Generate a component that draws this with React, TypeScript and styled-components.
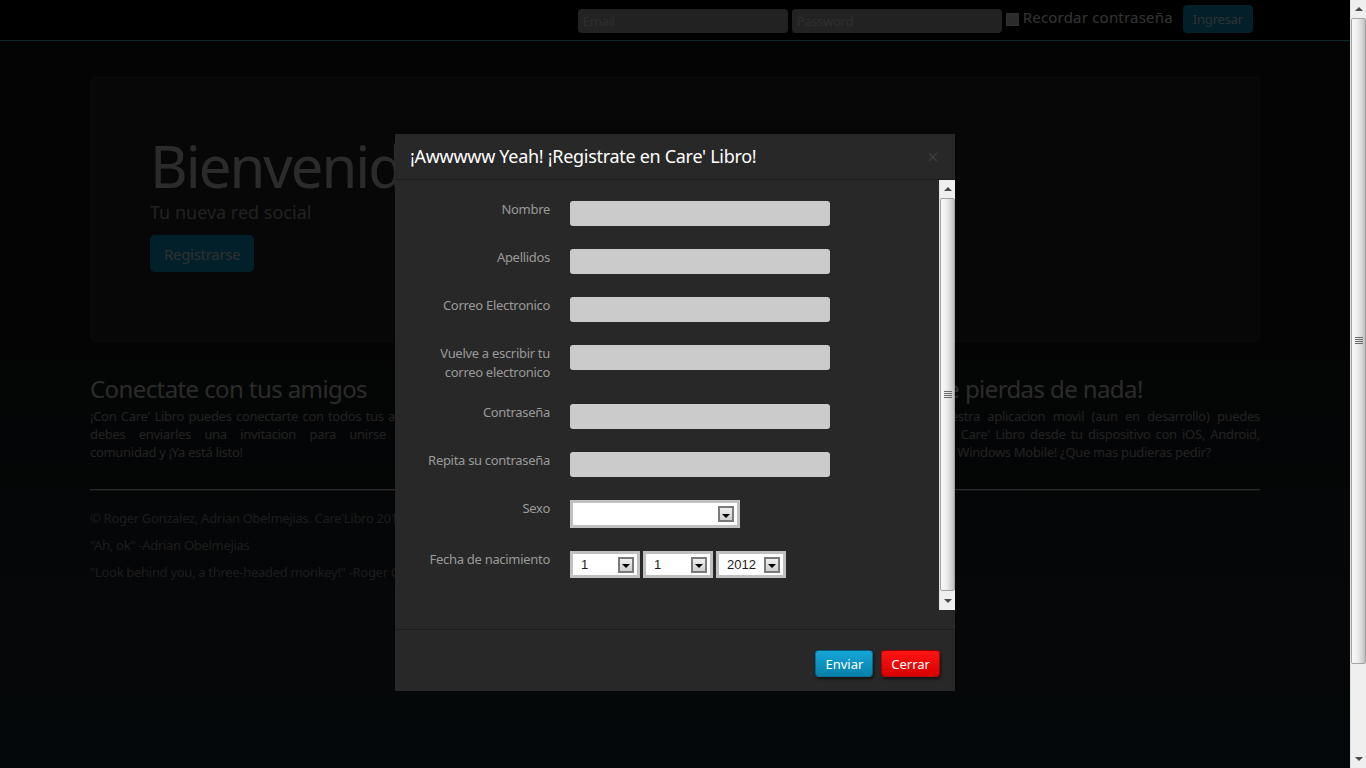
import React from "react";
import styled, { createGlobalStyle } from "styled-components";

const GlobalStyle = createGlobalStyle`
  html, body { margin: 0; padding: 0; height: 100%; overflow: hidden; background: #000; }
  body { font-family: "Noto Sans", "Open Sans", sans-serif; }
  #root { height: 100%; }
  *, *::before, *::after { box-sizing: border-box; }
`;

const Shell = styled.div`
  display: flex;
  width: 100%;
  height: 100vh;
`;

const Viewport = styled.div`
  position: relative;
  flex: 1;
  overflow: hidden;
  background: linear-gradient(to bottom, #141414 0%, #161819 45%, #1c2b35 100%);
`;

/* ---------- navbar ---------- */
const NavBar = styled.header`
  height: 41px;
  background: #000;
  border-bottom: 1px solid #40c2f0;
`;

const NavInner = styled.form`
  width: 1170px;
  margin: 0 auto;
  height: 40px;
  display: flex;
  justify-content: flex-end;
  align-items: flex-start;
  padding-right: 7px;
`;

const NavInput = styled.input`
  width: 210px;
  height: 24px;
  margin: 9px 4px 0 0;
  border: none;
  border-radius: 4px;
  background: #ababab;
  padding: 0 5px;
  font-family: "Noto Sans", sans-serif;
  font-size: 13px;
  letter-spacing: -0.3px;
  color: #333;
  &::placeholder { color: #e4e4e4; }
`;

const NavCheck = styled.input`
  appearance: none;
  width: 13px;
  height: 13px;
  margin: 13px 4px 0 0;
  background: #d4d4d4;
  border: 1px solid #f6f6f6;
`;

const RememberLabel = styled.label`
  margin: 7px 10px 0 0;
  font-size: 15px;
  line-height: 20px;
  letter-spacing: 0.2px;
  color: #fff;
`;

const NavButton = styled.button`
  margin-top: 5px;
  height: 28px;
  padding: 0 10px;
  border: none;
  border-radius: 4px;
  background: #0f9bcd;
  color: #e4f2f6;
  font-family: "Noto Sans", sans-serif;
  font-size: 13px;
  letter-spacing: -0.2px;
`;

/* ---------- page ---------- */
const Container = styled.main`
  width: 1170px;
  margin: 0 auto;
  padding-top: 36px;
`;

const Hero = styled.section`
  border: 1px solid #3a3a3a;
  border-radius: 6px;
  background: #232323;
  padding: 59px 59px 69px;
  margin-bottom: 29px;
`;

const HeroTitle = styled.h1`
  margin: 0 0 4px;
  font-size: 58px;
  line-height: 58px;
  letter-spacing: -2px;
  font-weight: 400;
  color: #d4d4d4;
`;

const HeroLead = styled.p`
  margin: 0 0 9px;
  font-size: 18px;
  line-height: 27px;
  color: #a8a8a8;
`;

const HeroButton = styled.button`
  height: 37px;
  padding: 0 14px;
  border: none;
  border-radius: 5px;
  background: #0c9fd2;
  color: #e2f0f4;
  font-family: "Noto Sans", sans-serif;
  font-size: 15px;
  letter-spacing: -0.3px;
`;

const Columns = styled.div`
  display: grid;
  grid-template-columns: 570px 570px;
  column-gap: 30px;
`;

const SectionTitle = styled.h2`
  margin: 0;
  font-size: 24px;
  line-height: 36px;
  letter-spacing: -0.6px;
  font-weight: 400;
  color: #d4d4d4;
  white-space: nowrap;
`;

const Para = styled.p`
  margin: 0 0 9px;
  font-size: 13px;
  line-height: 18px;
  letter-spacing: -0.3px;
  color: #aaa;
`;

const TextLine = styled.span<{ $justify?: boolean }>`
  display: block;
  text-align: ${(p) => (p.$justify ? "justify" : "left")};
  text-align-last: ${(p) => (p.$justify ? "justify" : "auto")};
`;

const Rule = styled.hr`
  margin: 19px 0 18px;
  border: none;
  border-top: 1px solid #d8d8d8;
  border-bottom: 1px solid #5a5a5a;
`;

const FooterText = styled.p`
  margin: 0 0 9px;
  font-size: 13px;
  line-height: 18px;
  letter-spacing: -0.3px;
  color: #8e8e8e;
`;

/* ---------- scrollbars ---------- */
const ScrollRail = styled.div<{ $h?: number }>`
  width: 16px;
  flex: none;
  display: flex;
  flex-direction: column;
  background: #efefef;
  border-left: 1px solid #e2e2e2;
  ${(p) => (p.$h ? `height: ${p.$h}px;` : "height: 100%;")}
`;

const ScrollButton = styled.div<{ $h: number; $down?: boolean }>`
  height: ${(p) => p.$h}px;
  flex: none;
  display: flex;
  align-items: center;
  justify-content: center;
  &::before {
    content: "";
    width: 0;
    height: 0;
    border-left: 4px solid transparent;
    border-right: 4px solid transparent;
    ${(p) => (p.$down ? "border-top: 4px solid #4a4a4a;" : "border-bottom: 4px solid #4a4a4a;")}
  }
`;

const ScrollTrack = styled.div`
  flex: 1;
  display: flex;
  flex-direction: column;
`;

const Thumb = styled.div<{ $h?: number }>`
  position: relative;
  ${(p) => (p.$h ? `height: ${p.$h}px;` : "flex: 1;")}
  border: 1px solid #a2a2a2;
  border-radius: 2px;
  background: linear-gradient(to right, #fafafa 0%, #ececec 45%, #d2d2d2 80%, #bdbdbd 100%);
  &::after {
    content: "";
    position: absolute;
    left: 50%;
    top: 50%;
    width: 8px;
    height: 7px;
    margin: -4px 0 0 -4px;
    background: repeating-linear-gradient(to bottom, #6a6a6a 0 1px, transparent 1px 2px);
  }
`;

const TrackEnd = styled.div`
  height: 1px;
  flex: none;
`;

/* ---------- modal ---------- */
const Backdrop = styled.div`
  position: absolute;
  inset: 0;
  background: rgba(0, 0, 0, 0.8);
`;

const Modal = styled.div`
  position: absolute;
  top: 50%;
  left: 50%;
  width: 560px;
  margin: -250px 0 0 -280px;
  background: #282828;
`;

const ModalHeader = styled.div`
  display: flex;
  justify-content: space-between;
  align-items: center;
  padding: 9px 15px;
  border-bottom: 1px solid #1c1c1c;
`;

const ModalTitle = styled.h3`
  margin: 0;
  font-size: 18px;
  line-height: 27px;
  letter-spacing: -0.3px;
  font-weight: 400;
  color: #fff;
`;

const CloseButton = styled.button`
  border: none;
  background: none;
  padding: 0;
  margin: 0 1px 0 0;
  font-family: "DejaVu Sans", sans-serif;
  font-size: 15px;
  line-height: 18px;
  color: #fff;
  opacity: 0.1;
`;

const ModalBody = styled.div`
  height: 430px;
  display: flex;
  margin-bottom: 19px;
`;

const FormArea = styled.div`
  flex: 1;
  padding: 20px 0 0 15px;
  display: flex;
  flex-direction: column;
  gap: 22px;
`;

const FieldRow = styled.div`
  display: grid;
  grid-template-columns: 140px 1fr;
  column-gap: 20px;
  align-items: start;
`;

const FieldLabel = styled.label`
  text-align: right;
  font-size: 13px;
  line-height: 18.5px;
  letter-spacing: -0.3px;
  color: #9a9a9a;
`;

const TextInput = styled.input`
  margin-top: 1px;
  width: 260px;
  height: 25px;
  border: none;
  border-radius: 3px;
  background: #cbcbcb;
  padding: 0 6px;
  font-family: "Noto Sans", sans-serif;
  font-size: 13px;
`;

const SelectGroup = styled.div`
  display: flex;
  gap: 3px;
`;

const SelectBox = styled.div<{ $w: number; $h: number }>`
  margin-top: 1px;
  width: ${(p) => p.$w}px;
  height: ${(p) => p.$h}px;
  border: 3px solid #c0c0c0;
  background: #fff;
  display: flex;
  align-items: center;
  padding: 0 3px 0 8px;
`;

const NativeSelect = styled.select`
  appearance: none;
  flex: 1;
  min-width: 0;
  border: none;
  background: transparent;
  padding: 0;
  outline: none;
  font-family: "Liberation Sans", Arial, sans-serif;
  font-size: 13px;
  color: #1c1c1c;
`;

const ArrowBox = styled.span`
  width: 16px;
  height: 16px;
  flex: none;
  border: 2px solid #7a7a7a;
  background: linear-gradient(#efefef, #cfcfcf);
  display: flex;
  align-items: center;
  justify-content: center;
  &::before {
    content: "";
    margin-top: 3px;
    width: 0;
    height: 0;
    border-left: 4px solid transparent;
    border-right: 4px solid transparent;
    border-top: 4px solid #000;
  }
`;

const ModalFooter = styled.div`
  border-top: 1px solid #1d1d1d;
  padding: 20px 15px 14px;
  display: flex;
  justify-content: flex-end;
  gap: 8px;
`;

const ActionButton = styled.button<{ $tone: "blue" | "red" }>`
  height: 27px;
  padding: 0 9px;
  border: 1px solid rgba(0, 0, 0, 0.3);
  border-radius: 4px;
  font-family: "Noto Sans", sans-serif;
  font-size: 13px;
  color: #fff;
  box-shadow: 1px 2px 3px rgba(0, 0, 0, 0.55);
  background: ${(p) =>
    p.$tone === "blue"
      ? "linear-gradient(#14a6d8, #0880aa)"
      : "linear-gradient(#ff1414, #d60000)"};
`;

const range = (a: number, b: number) => {
  const out: number[] = [];
  if (a <= b) for (let i = a; i <= b; i++) out.push(i);
  else for (let i = a; i >= b; i--) out.push(i);
  return out;
};

const Select: React.FC<{ w: number; h: number; options: string[] }> = ({ w, h, options }) => (
  <SelectBox $w={w} $h={h}>
    <NativeSelect defaultValue={options[0]}>
      {options.map((o) => (
        <option key={o} value={o}>
          {o}
        </option>
      ))}
    </NativeSelect>
    <ArrowBox />
  </SelectBox>
);

const Scrollbar: React.FC<{ height?: number; btn: number; thumb?: number }> = ({ height, btn, thumb }) => (
  <ScrollRail $h={height}>
    <ScrollButton $h={btn} />
    <ScrollTrack>
      <Thumb $h={thumb} />
      {thumb ? null : <TrackEnd />}
    </ScrollTrack>
    <ScrollButton $h={btn} $down />
  </ScrollRail>
);

const fields = [
  { label: ["Nombre"], type: "text" },
  { label: ["Apellidos"], type: "text" },
  { label: ["Correo Electronico"], type: "email" },
  { label: ["Vuelve a escribir tu", "correo electronico"], type: "email" },
  { label: ["Contraseña"], type: "password" },
  { label: ["Repita su contraseña"], type: "password" },
];

export default function App() {
  return (
    <>
      <GlobalStyle />
      <Shell>
        <Viewport>
          <NavBar>
            <NavInner>
              <NavInput type="email" placeholder="Email" />
              <NavInput type="password" placeholder="Password" />
              <NavCheck type="checkbox" id="remember" />
              <RememberLabel htmlFor="remember">Recordar contraseña</RememberLabel>
              <NavButton type="button">Ingresar</NavButton>
            </NavInner>
          </NavBar>

          <Container>
            <Hero>
              <HeroTitle>Bienvenido a Care' Libro</HeroTitle>
              <HeroLead>Tu nueva red social</HeroLead>
              <HeroButton type="button">Registrarse</HeroButton>
            </Hero>

            <Columns>
              <div>
                <SectionTitle>Conectate con tus amigos</SectionTitle>
                <Para>
                  <TextLine $justify>
                    ¡Con Care' Libro puedes conectarte con todos tus amigos de una forma muy facil y rapida! Solo
                  </TextLine>
                  <TextLine $justify>
                    debes enviarles una invitacion para unirse a nuestra maravillosa y extraordinaria
                  </TextLine>
                  <TextLine>comunidad y ¡Ya está listo!</TextLine>
                </Para>
              </div>
              <div>
                <SectionTitle>¡Desde tu celular ya no te pierdas de nada!</SectionTitle>
                <Para>
                  <TextLine $justify>
                    ¡Llévanos contigo a todas partes! Con nuestra aplicacion movil (aun en desarrollo) puedes
                  </TextLine>
                  <TextLine $justify>
                    acceder a todas las funciones que te ofrece Care' Libro desde tu dispositivo con iOS, Android,
                  </TextLine>
                  <TextLine>
                    Blackberry, Symbian, Bada, webOS y hasta en Windows Mobile! ¿Que mas pudieras pedir?
                  </TextLine>
                </Para>
              </div>
            </Columns>

            <Rule />
            <footer>
              <FooterText>© Roger Gonzalez, Adrian Obelmejias. Care'Libro 2012</FooterText>
              <FooterText>"Ah, ok" -Adrian Obelmejias</FooterText>
              <FooterText>"Look behind you, a three-headed monkey!" -Roger Gonzalez</FooterText>
            </footer>
          </Container>

          <Backdrop />

          <Modal role="dialog">
            <ModalHeader>
              <ModalTitle>¡Awwwww Yeah! ¡Registrate en Care' Libro!</ModalTitle>
              <CloseButton type="button">×</CloseButton>
            </ModalHeader>
            <ModalBody>
              <FormArea>
                {fields.map((f) => (
                  <FieldRow key={f.label.join(" ")}>
                    <FieldLabel>
                      {f.label.map((l, i) => (
                        <React.Fragment key={l}>
                          {i > 0 && <br />}
                          {l}
                        </React.Fragment>
                      ))}
                    </FieldLabel>
                    <div>
                      <TextInput type={f.type} />
                    </div>
                  </FieldRow>
                ))}
                <FieldRow>
                  <FieldLabel>Sexo</FieldLabel>
                  <div>
                    <Select w={170} h={28} options={["", "Masculino", "Femenino"]} />
                  </div>
                </FieldRow>
                <FieldRow>
                  <FieldLabel>Fecha de nacimiento</FieldLabel>
                  <SelectGroup>
                    <Select w={70} h={27} options={range(1, 31).map(String)} />
                    <Select w={70} h={27} options={range(1, 12).map(String)} />
                    <Select w={70} h={27} options={range(2012, 1900).map(String)} />
                  </SelectGroup>
                </FieldRow>
              </FormArea>
              <Scrollbar height={430} btn={18} />
            </ModalBody>
            <ModalFooter>
              <ActionButton type="button" $tone="blue">Enviar</ActionButton>
              <ActionButton type="button" $tone="red">Cerrar</ActionButton>
            </ModalFooter>
          </Modal>
        </Viewport>
        <Scrollbar btn={18} thumb={646} />
      </Shell>
    </>
  );
}
